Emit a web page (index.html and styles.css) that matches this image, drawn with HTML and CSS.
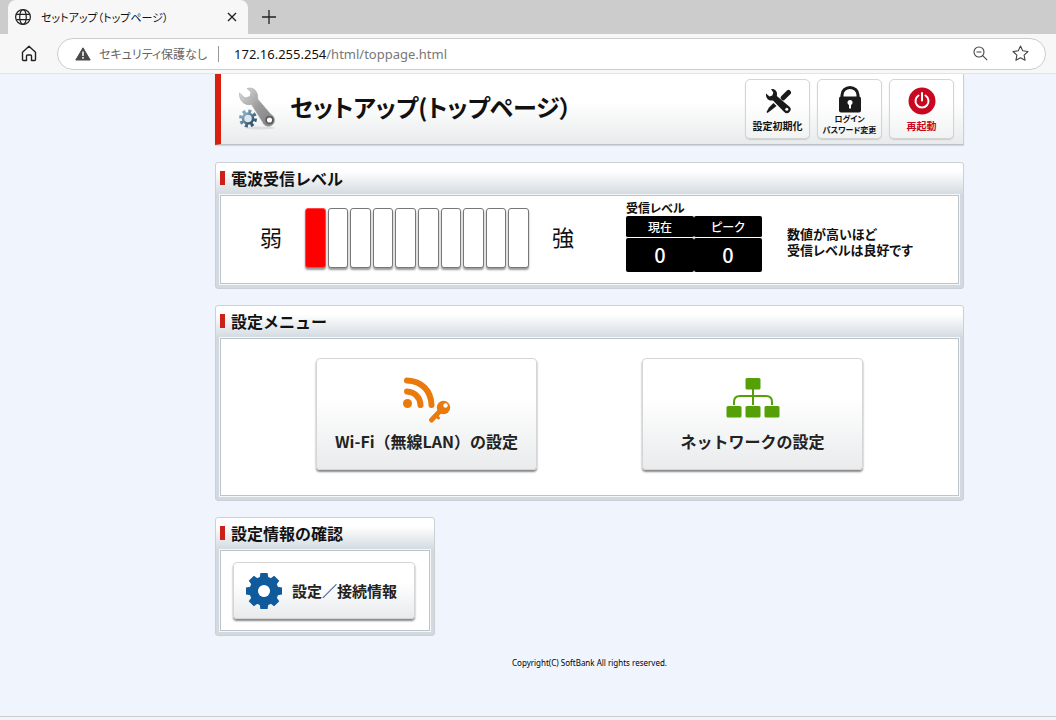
FILE: index.html
```html
<!DOCTYPE html>
<html lang="ja">
<head>
  <meta charset="UTF-8">
  <meta name="viewport" content="width=device-width, initial-scale=1.0">
  <title>セットアップ（トップページ）</title>
  <link rel="stylesheet" href="styles.css">
</head>
<body>
  <div class="tab-bar">
    <div class="tab">
      <svg width="18" height="18" viewBox="0 0 18 18" fill="none" stroke="#222" stroke-width="1.2">
        <circle cx="9" cy="9" r="7.4"/>
        <ellipse cx="9" cy="9" rx="3.3" ry="7.4"/>
        <path d="M2.3 6.3h13.4M2.3 11.7h13.4"/>
      </svg>
      <span class="tab-title">セットアップ（トップページ）</span>
      <button class="chrome-button" aria-label="タブを閉じる">
        <svg width="10" height="10" viewBox="0 0 10 10" stroke="#222" stroke-width="1.4"><path d="M1 1l8 8M9 1l-8 8"/></svg>
      </button>
    </div>
    <button class="chrome-button new-tab" aria-label="新しいタブ">
      <svg width="14" height="14" viewBox="0 0 14 14" stroke="#222" stroke-width="1.3"><path d="M7 0v14M0 7h14"/></svg>
    </button>
  </div>

  <div class="toolbar">
    <button class="chrome-button" aria-label="ホーム">
      <svg width="16" height="17" viewBox="0 0 16 17" fill="none" stroke="#222" stroke-width="1.4" stroke-linejoin="round">
        <path d="M1.5 7.2L8 1.3l6.5 5.9v7.3q0 1-1 1h-3V11q0-1-1-1h-3q-1 0-1 1v4.5h-3q-1 0-1-1z"/>
      </svg>
    </button>
    <div class="address-bar">
      <svg width="16" height="14" viewBox="0 0 16 14">
        <path d="M8 .8L15.2 13H.8z" fill="#4a4a4a" stroke="#4a4a4a" stroke-linejoin="round"/>
        <path d="M8 4.5V9M8 10v1.7" stroke="#fff" stroke-width="1.5"/>
      </svg>
      <span class="security">セキュリティ保護なし</span>
      <span class="url"><b>172.16.255.254</b>/html/toppage.html</span>
      <button class="chrome-button" aria-label="ズーム">
        <svg width="15" height="15" viewBox="0 0 15 15" fill="none" stroke="#444" stroke-width="1.1"><circle cx="6" cy="6" r="5"/><path d="M3.5 6h5M9.7 9.7l4.5 4.5"/></svg>
      </button>
      <button class="chrome-button star" aria-label="お気に入りに追加">
        <svg width="17" height="17" viewBox="0 0 17 17" fill="none" stroke="#444" stroke-width="1.1" stroke-linejoin="round"><path d="M8.5 1l2.2 4.8 5.3.7-3.9 3.6 1 5.2-4.6-2.6-4.6 2.6 1-5.2L1 6.5l5.3-.7z"/></svg>
      </button>
    </div>
  </div>

  <main>
    <header class="page-header">
      <svg width="40" height="44" viewBox="0 0 40 44">
        <defs>
          <linearGradient id="metal" x1="0" y1="0" x2="1" y2="1">
            <stop offset="0" stop-color="#dedede"/>
            <stop offset=".5" stop-color="#9c9c9c"/>
            <stop offset="1" stop-color="#7c7c7c"/>
          </linearGradient>
          <linearGradient id="steel" x1="0" y1="0" x2="1" y2="1">
            <stop offset="0" stop-color="#8fb1ca"/>
            <stop offset="1" stop-color="#274860"/>
          </linearGradient>
        </defs>
        <ellipse cx="22" cy="41" rx="15" ry="1.5" fill="#ddd"/>
        <path d="M9 1.5C15-.5 20.5 4 19.7 12L33 27.5a6.2 6.2 0 1 1-8.5 7.5L13.5 17.5C7 19 1 14 1.5 6L7 11l5-1.5 1-4.5z" fill="url(#metal)" stroke="#aaa" stroke-width=".6"/>
        <circle cx="31.5" cy="33" r="3.3" fill="#fff" stroke="#555" stroke-width="1.5"/>
        <circle cx="10" cy="31.5" r="7" fill="none" stroke="url(#steel)" stroke-width="4" stroke-dasharray="2.9 2.598"/>
        <circle cx="10" cy="31.5" r="5" fill="#d8e7f0" stroke="url(#steel)" stroke-width="2.5"/>
      </svg>
      <h1>セットアップ(トップページ）</h1>
      <nav class="header-nav">
        <a class="header-button" href="#reset">
          <svg width="28" height="28" viewBox="0 0 28 28">
            <path d="M24.5 5.5l-5.3 5.3" stroke="#1a1a1a" stroke-width="5" stroke-linecap="round"/>
            <path d="M9.5 16l3 3L7.500 23l-4 3-1-1 2.500-4.500z" fill="#1a1a1a"/>
            <path d="M7 2c4-.8 7 2.500 5.800 7L25.500 19.700a3.700 3.700 0 1 1-5.300 5.300L9 13.500C4.500 14 1.500 11 2 6.500L5.500 9.500 8.300 8.500 9.300 5.500z" fill="#1a1a1a"/>
            <circle cx="22.800" cy="22.300" r="1.500" fill="#fff"/>
          </svg>
          <span>設定初期化</span>
        </a>
        <a class="header-button two-line" href="#password">
          <svg width="24" height="27" viewBox="0 0 24 27">
            <path d="M4 11V9a8 7.5 0 0 1 16 0v2" fill="none" stroke="#1a1a1a" stroke-width="3"/>
            <rect x="1" y="10.5" width="22" height="16" rx="2" fill="#1a1a1a"/>
            <circle cx="12" cy="16.5" r="2.5" fill="#fff"/>
            <path d="M12 17v5.5" stroke="#fff" stroke-width="2"/>
          </svg>
          <span>ログイン<br>パスワード変更</span>
        </a>
        <a class="header-button reboot" href="#reboot">
          <svg width="28" height="28" viewBox="0 0 28 28" fill="none" stroke="#fff" stroke-width="2" stroke-linecap="round">
            <circle cx="14" cy="14" r="13.5" fill="#c70820" stroke="none"/>
            <path d="M10.5 8.5a6.5 6.5 0 1 0 7 0M14 6v7.5"/>
          </svg>
          <span>再起動</span>
        </a>
      </nav>
    </header>

    <section class="panel">
      <h2>電波受信レベル</h2>
      <div class="panel-body signal">
        <span class="strength">弱</span>
        <div class="meter" role="meter" aria-label="電波受信レベル" aria-valuemin="0" aria-valuemax="10" aria-valuenow="1">
          <i class="bar on"></i><i class="bar"></i><i class="bar"></i><i class="bar"></i><i class="bar"></i>
          <i class="bar"></i><i class="bar"></i><i class="bar"></i><i class="bar"></i><i class="bar"></i>
        </div>
        <span class="strength">強</span>
        <table class="level-table">
          <caption>受信レベル</caption>
          <thead>
            <tr><th>現在</th><th>ピーク</th></tr>
          </thead>
          <tbody>
            <tr><td>0</td><td>0</td></tr>
          </tbody>
        </table>
        <p class="note">数値が高いほど<br>受信レベルは良好です</p>
      </div>
    </section>

    <section class="panel">
      <h2>設定メニュー</h2>
      <div class="panel-body menu">
        <a class="menu-button" href="#wifi">
          <svg width="48" height="48" viewBox="0 0 48 48" fill="none" stroke="#ea7a0c" stroke-linecap="round">
            <path d="M4 4.5C19 5 28 15 28.5 29" stroke-width="6"/>
            <path d="M4 15.5c8 .5 13 6 13.5 13.5" stroke-width="6"/>
            <circle cx="4.5" cy="27.5" r="4.5" fill="#ea7a0c" stroke="none"/>
            <path d="M40 32L28.5 44" stroke="#fff" stroke-width="7"/>
            <circle cx="40.5" cy="31.5" r="7.5" fill="#fff" stroke="none"/>
            <path d="M39 33L28.5 44" stroke-width="5"/>
            <path d="M33 39.5l2.5 2.5" stroke-width="3"/>
            <circle cx="40.5" cy="31.5" r="6.7" fill="#ea7a0c" stroke="none"/>
            <circle cx="42.5" cy="29.5" r="2.2" fill="#fff" stroke="none"/>
          </svg>
          <span>Wi-Fi（無線LAN）の設定</span>
        </a>
        <a class="menu-button" href="#network">
          <svg width="54" height="48" viewBox="0 0 54 48">
            <path d="M27 13v16M8 29v-3q0-6 6-6h26q6 0 6 6v3" fill="none" stroke="#55a006" stroke-width="2"/>
            <g fill="#55a006">
              <rect x="19.5" y="2" width="15" height="11.5" rx="1.5"/>
              <rect x=".5" y="30" width="15" height="11.5" rx="1.5"/>
              <rect x="19.5" y="30" width="15" height="11.5" rx="1.5"/>
              <rect x="38.5" y="30" width="15" height="11.5" rx="1.5"/>
            </g>
          </svg>
          <span>ネットワークの設定</span>
        </a>
      </div>
    </section>

    <section class="panel panel-small">
      <h2>設定情報の確認</h2>
      <div class="panel-body info">
        <a class="menu-button info-button" href="#info">
          <svg width="36" height="36" viewBox="0 0 36 36">
            <circle cx="18" cy="18" r="10" fill="none" stroke="#0f5b9c" stroke-width="9"/>
            <g fill="#0f5b9c">
              <path id="teeth" d="M13.5 6l.9-6h7.2l.9 6v24l-.9 6h-7.2l-.9-6V24h9V12h-9z"/>
              <use href="#teeth" transform="rotate(45 18 18)"/>
              <use href="#teeth" transform="rotate(90 18 18)"/>
              <use href="#teeth" transform="rotate(135 18 18)"/>
            </g>
            <circle cx="18" cy="18" r="6" fill="#fff"/>
          </svg>
          <span>設定／接続情報</span>
        </a>
      </div>
    </section>

    <footer>Copyright(C) SoftBank All rights reserved.</footer>
  </main>
</body>
</html>
```

FILE: styles.css
```css
* {
  box-sizing: border-box;
}

body {
  display: flex;
  flex-direction: column;
  min-height: 100vh;
  margin: 0;
  background-color: #eff4fd;
  color: #111;
  font-family: "Noto Sans CJK JP", sans-serif;
}

a {
  color: inherit;
  text-decoration: none;
}

svg {
  display: block;
  flex: none;
}

/* browser bar */
.chrome-button {
  display: flex;
  padding: 0;
  border: none;
  background: none;
}

.tab-bar {
  display: flex;
  height: 34px;
  padding-left: 8px;
  background-color: #ccc;
  font-feature-settings: "palt";
}

.tab {
  display: flex;
  align-items: center;
  width: 240px;
  padding: 0 11px 0 6px;
  border-radius: 8px 8px 0 0;
  background-color: #f7f7f7;
}

.tab-title {
  flex: 1;
  margin-left: 9px;
  font-size: 11px;
  line-height: 18px;
}

.new-tab {
  align-items: center;
  margin-left: 14px;
}

.toolbar {
  display: flex;
  align-items: center;
  height: 40px;
  padding: 0 10px 0 21px;
  border-bottom: 1px solid #e2e4e8;
  background-color: #f7f7f7;
  font-feature-settings: "palt";
}

.address-bar {
  display: flex;
  flex: 1;
  align-items: center;
  height: 32px;
  margin-left: 20px;
  padding: 0 16px 0 17px;
  border: 1px solid #ccc;
  border-radius: 16px;
  background-color: #fff;
}

.security {
  margin-left: 8px;
  padding-right: 11px;
  border-right: 1px solid #999;
  color: #666;
  font-size: 12px;
  line-height: 16px;
}

.url {
  flex: 1;
  margin-left: 15px;
  color: #777;
  font-family: "Noto Sans", sans-serif;
  font-size: 13px;
}

.url b {
  color: #111;
  font-weight: normal;
}

.star {
  margin-left: 24px;
}

/* page */
main {
  flex: 1;
  margin-bottom: 3px;
  padding: 0 92px 0 215px;
  border-bottom: 1px solid #ccc;
}

.page-header {
  display: flex;
  align-items: center;
  height: 71px;
  padding: 0 9px 0 17px;
  border-left: 6px solid #d9200f;
  border-right: 1px solid #ccd0d4;
  border-bottom: 1px solid #bcc1c5;
  background: linear-gradient(#fff 40%, #e8ebec);
  box-shadow: 0 1px 1px #d5d9dd;
  font-feature-settings: "palt";
}

h1 {
  flex: 1;
  margin: 0 0 0 12px;
  padding-bottom: 4px;
  font-size: 24px;
  line-height: 36px;
}

.header-nav {
  display: flex;
  gap: 7px;
}

.header-button {
  display: flex;
  flex-direction: column;
  align-items: center;
  width: 65px;
  height: 60px;
  padding-top: 7px;
  border: 1px solid #d2d4d5;
  border-radius: 5px;
  background: linear-gradient(#fff 40%, #f1f2f2);
  box-shadow: 0 1px 1px #ccc;
  font-size: 10px;
  font-weight: bold;
  line-height: 12px;
  text-align: center;
  white-space: nowrap;
}

.header-button span {
  margin-top: 5px;
}

.header-button.two-line {
  padding-top: 6px;
  font-size: 8px;
  line-height: 11px;
}

.header-button.two-line span {
  margin-top: 0;
}

.reboot {
  color: #c70820;
}

.panel {
  margin-top: 16px;
  padding: 0 4px 4px;
  border: 1px solid #cbd0d4;
  border-radius: 3px;
  background: linear-gradient(#fff 8px, #d2dae0 32px);
}

.page-header + .panel {
  margin-top: 17px;
}

.panel-small {
  width: 220px;
}

h2 {
  display: flex;
  align-items: center;
  height: 32px;
  margin: 0;
  padding-bottom: 2px;
  font-size: 16px;
  line-height: 20px;
}

h2::before {
  width: 5px;
  height: 14px;
  margin-right: 6px;
  background-color: #cc2119;
  content: "";
}

.panel-body {
  border: 1px solid #bcc5cc;
  outline: 1px solid #f5f7f8;
  background-color: #fff;
}

.signal {
  display: flex;
  align-items: flex-start;
  height: 89px;
  padding-left: 39px;
}

.strength {
  margin-top: 24px;
  font-size: 22px;
  line-height: 32px;
}

.meter {
  display: flex;
  gap: 2px;
  width: 224px;
  height: 60px;
  margin: 12px 23px 0;
}

.bar {
  flex: 1;
  border: 1px solid #777;
  border-radius: 3px;
  background-color: #fff;
  box-shadow: 0 2px 2px #999;
}

.bar.on {
  border-color: #f44;
  background-color: #f00;
}

.level-table {
  width: 136px;
  margin: 4px 0 0 52px;
  border-spacing: 0;
  table-layout: fixed;
}

caption {
  font-feature-settings: "palt";
  font-size: 12px;
  font-weight: bold;
  line-height: 16px;
  text-align: left;
}

.level-table th,
.level-table td {
  padding: 0;
  border-radius: 2px;
  background-color: #000;
  color: #fff;
  text-align: center;
}

.level-table th {
  height: 22px;
  border-bottom: 1px solid #fff;
  font-feature-settings: "palt";
  font-size: 12px;
  font-weight: 500;
  line-height: 20px;
}

.level-table td {
  height: 34px;
  font-size: 20px;
  font-weight: 500;
  line-height: 32px;
}

.note {
  margin: 30px 0 0 25px;
  font-feature-settings: "palt";
  font-size: 13px;
  font-weight: bold;
  line-height: 16px;
}

.menu {
  display: flex;
  align-items: flex-start;
  justify-content: center;
  gap: 105px;
  height: 158px;
  padding-top: 19px;
}

.menu-button {
  display: flex;
  flex-direction: column;
  align-items: center;
  width: 221px;
  height: 112px;
  padding-top: 17px;
  border: 1px solid #d5d5d5;
  border-radius: 4px;
  background: linear-gradient(#fff 35%, #e9ebec);
  box-shadow: 0 2px 2px #888;
  color: #222;
  font-size: 16px;
  font-weight: bold;
  line-height: 20px;
  white-space: nowrap;
}

.menu-button span {
  margin-top: 7px;
}

.info {
  height: 81px;
  padding: 11px 12px;
}

.info-button {
  flex-direction: row;
  width: 182px;
  height: 57px;
  padding: 0 12px;
  font-size: 15px;
}

.info-button span {
  margin: 0 0 0 10px;
}

footer {
  margin-top: 20px;
  color: #000;
  font-family: "Noto Sans", sans-serif;
  font-size: 8px;
  line-height: 14px;
  text-align: center;
}
```
